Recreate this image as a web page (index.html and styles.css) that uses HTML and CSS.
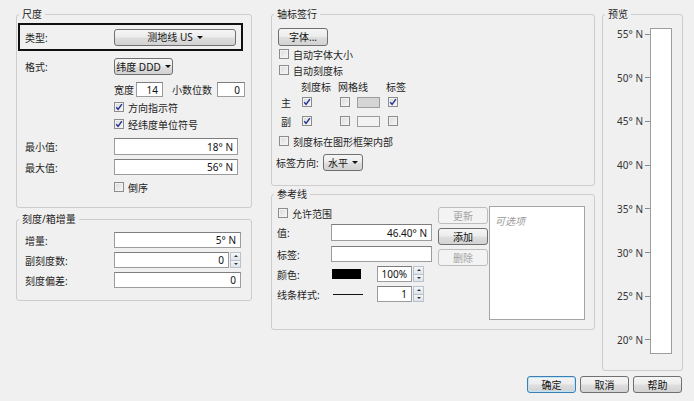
FILE: index.html
```html
<!DOCTYPE html>
<html lang="zh-CN">
<head>
<meta charset="utf-8">
<title>轴设置</title>
<link rel="stylesheet" href="styles.css">
</head>
<body>
<div class="dialog">
  <div class="cols">
    <div class="col col-left">
      <fieldset class="grp g-scale">
        <legend>尺度</legend>
        <div class="hl"><span class="lbl">类型:</span><span class="btn b-type">测地线 US<i class="arr"></i></span></div>
        <div class="row r-fmt"><span class="lbl">格式:</span><span class="btn b-fmt">纬度 DDD<i class="arr"></i></span></div>
        <div class="row r-wid"><span class="lbl"></span><span class="t-wid">宽度</span><span class="inp i-wid">14</span><span class="t-dec">小数位数</span><span class="inp i-dec">0</span></div>
        <div class="row r-cb1"><span class="lbl"></span><span class="cb on"><svg viewBox="0 0 8 8"><path d="M1.2 4.2 3.1 6.4 6.9 1.1"/></svg></span><span class="cbt">方向指示符</span></div>
        <div class="row r-cb2"><span class="lbl"></span><span class="cb on"><svg viewBox="0 0 8 8"><path d="M1.2 4.2 3.1 6.4 6.9 1.1"/></svg></span><span class="cbt">经纬度单位符号</span></div>
        <div class="row r-min"><span class="lbl">最小值:</span><span class="inp i-val">18° N</span></div>
        <div class="row r-max"><span class="lbl">最大值:</span><span class="inp i-val">56° N</span></div>
        <div class="row r-rev"><span class="lbl"></span><span class="cb"></span><span class="cbt">倒序</span></div>
      </fieldset>
      <fieldset class="grp g-inc">
        <legend>刻度/箱增量</legend>
        <div class="row r-i1"><span class="lbl">增量:</span><span class="inp i-inc">5° N</span></div>
        <div class="row r-i2"><span class="lbl">副刻度数:</span><span class="inp i-minor">0</span><span class="spin"><span class="up"></span><span class="dn"></span></span></div>
        <div class="row r-i3"><span class="lbl">刻度偏差:</span><span class="inp i-inc">0</span></div>
      </fieldset>
    </div>

    <div class="col col-mid">
      <fieldset class="grp g-axis">
        <legend>轴标签行</legend>
        <div class="row r-font"><span class="btn b-font">字体...</span></div>
        <div class="row r-ac"><span class="cb"></span><span class="cbt">自动字体大小</span></div>
        <div class="row r-ac"><span class="cb"></span><span class="cbt">自动刻度标</span></div>
        <div class="mhead"><span class="h1">刻度标</span><span class="h2">网格线</span><span class="h3">标签</span></div>
        <div class="mrow m1">
          <span class="ml">主</span>
          <span class="mc1"><span class="cb on"><svg viewBox="0 0 8 8"><path d="M1.2 4.2 3.1 6.4 6.9 1.1"/></svg></span></span>
          <span class="mc2"><span class="cb"></span></span>
          <span class="msw"><span class="sw sw-gray"></span></span>
          <span class="mc3"><span class="cb on"><svg viewBox="0 0 8 8"><path d="M1.2 4.2 3.1 6.4 6.9 1.1"/></svg></span></span>
        </div>
        <div class="mrow m2">
          <span class="ml">副</span>
          <span class="mc1"><span class="cb on"><svg viewBox="0 0 8 8"><path d="M1.2 4.2 3.1 6.4 6.9 1.1"/></svg></span></span>
          <span class="mc2"><span class="cb"></span></span>
          <span class="msw"><span class="sw sw-light"></span></span>
          <span class="mc3"><span class="cb"></span></span>
        </div>
        <div class="row r-inside"><span class="cb"></span><span class="cbt">刻度标在图形框架内部</span></div>
        <div class="row r-dir"><span class="t-dir">标签方向:</span><span class="btn b-dir">水平<i class="arr"></i></span></div>
      </fieldset>

      <fieldset class="grp g-ref">
        <legend>参考线</legend>
        <div class="ref">
          <div class="ref-form">
            <div class="row r-range"><span class="cb"></span><span class="cbt">允许范围</span></div>
            <div class="row rf r-val"><span class="rl">值:</span><span class="inp i-ref">46.40° N</span></div>
            <div class="row rf r-lab"><span class="rl">标签:</span><span class="inp i-ref"></span></div>
            <div class="row rf r-col"><span class="rl">颜色:</span><span class="colsw"></span><span class="inp i-pct">100%</span><span class="spin"><span class="up"></span><span class="dn"></span></span></div>
            <div class="row rf r-line"><span class="rl">线条样式:</span><span class="lnsw"></span><span class="inp i-pct">1</span><span class="spin"><span class="up"></span><span class="dn"></span></span></div>
          </div>
          <div class="ref-btns">
            <span class="btn dis">更新</span>
            <span class="btn">添加</span>
            <span class="btn dis">删除</span>
          </div>
          <div class="ref-list"><span class="ph">可选项</span></div>
        </div>
      </fieldset>
    </div>

    <fieldset class="grp g-prev">
      <legend>预览</legend>
      <div class="prev">
        <div class="axis">
          <div class="tk"><span>55° N</span><i></i></div>
          <div class="tk"><span>50° N</span><i></i></div>
          <div class="tk"><span>45° N</span><i></i></div>
          <div class="tk"><span>40° N</span><i></i></div>
          <div class="tk"><span>35° N</span><i></i></div>
          <div class="tk"><span>30° N</span><i></i></div>
          <div class="tk"><span>25° N</span><i></i></div>
          <div class="tk"><span>20° N</span><i></i></div>
        </div>
        <div class="bar"></div>
      </div>
    </fieldset>
  </div>

  <div class="foot">
    <span class="btn b-ok">确定</span>
    <span class="btn b-foot">取消</span>
    <span class="btn b-foot">帮助</span>
  </div>
</div>
</body>
</html>
```

FILE: styles.css
```css
* { box-sizing: border-box; }
html, body { margin: 0; padding: 0; }
body {
  width: 694px;
  height: 401px;
  overflow: hidden;
  background: #f0f0f0;
  font-family: "Noto Sans", "Noto Sans CJK SC", sans-serif;
  font-size: 10px;
  color: #1e1e1e;
}

.dialog { padding: 7px 11px 0 16px; }
.cols { display: flex; height: 364px; }
.col { display: flex; flex-direction: column; }
.col-left { width: 236px; }
.col-mid { width: 324px; margin-left: 19px; }

/* group boxes */
.grp {
  margin: 0;
  padding: 0;
  min-width: 0;
  border: 1px solid #cdcdcd;
  border-radius: 3px;
}
.grp legend {
  margin-left: 2px;
  padding: 0 3px;
  line-height: 14px;
  font-size: 10px;
  color: #1e1e1e;
}

.row { display: flex; align-items: center; flex: none; }
.lbl { width: 89px; flex: none; }
.cbt { margin-left: 4px; white-space: nowrap; }

/* controls */
.btn {
  display: inline-flex;
  align-items: center;
  justify-content: center;
  flex: none;
  height: 17px;
  border: 1px solid #707070;
  border-radius: 3px;
  background: linear-gradient(#f5f5f5 0%, #ececec 48%, #dedede 52%, #d2d2d2 100%);
  color: #111;
  white-space: nowrap;
  line-height: 1;
}
.btn.dis {
  border-color: #bdbdbd;
  background: #f3f3f3;
  color: #a3a3a3;
}
.arr {
  display: inline-block;
  width: 0;
  height: 0;
  margin-left: 4px;
  border-left: 3px solid transparent;
  border-right: 3px solid transparent;
  border-top: 3px solid #111;
}
.inp {
  display: flex;
  align-items: center;
  justify-content: flex-end;
  flex: none;
  height: 16px;
  padding-right: 4px;
  background: #fff;
  border: 1px solid #9c9c9c;
  border-top-color: #7d7d7d;
  color: #111;
  line-height: 1;
}
.cb {
  display: inline-flex;
  align-items: center;
  justify-content: center;
  flex: none;
  width: 10px;
  height: 10px;
  border: 1px solid #8c8c8c;
  background: linear-gradient(135deg, #d9d9d9, #f8f8f8);
  box-shadow: inset 0 0 0 1px #f2f2f2;
}
.cb svg { width: 8px; height: 8px; }
.cb path { fill: none; stroke: #24358f; stroke-width: 1.5; }
.spin {
  display: flex;
  flex-direction: column;
  flex: none;
  width: 11px;
  height: 16px;
  margin-left: 1px;
}
.spin span {
  flex: 1;
  display: flex;
  align-items: center;
  justify-content: center;
  border: 1px solid #b9c2cc;
  background: linear-gradient(#f4f6f9, #dde4eb);
}
.spin .dn { border-top: none; }
.spin .up::after, .spin .dn::after {
  content: "";
  width: 0;
  height: 0;
  border-left: 2px solid transparent;
  border-right: 2px solid transparent;
}
.spin .up::after { border-bottom: 2px solid #333; }
.spin .dn::after { border-top: 2px solid #333; }

/* 尺度 */
.g-scale { padding-bottom: 12px; }
.hl {
  display: flex;
  align-items: center;
  width: 225px;
  height: 28px;
  margin: 2px 0 0 1px;
  padding-left: 5px;
  border: 2px solid #111;
}
.b-type { width: 122px; }
.g-scale .row { padding-left: 8px; }
.r-fmt { margin-top: 7px; height: 17px; }
.b-fmt { width: 59px; }
.r-wid { margin-top: 7px; height: 15px; }
.r-wid .inp { height: 15px; }
.t-wid { width: 22px; }
.i-wid { width: 27px; }
.t-dec { width: 45px; margin-left: 9px; }
.i-dec { width: 28px; }
.r-cb1 { margin-top: 2px; height: 16px; }
.r-cb2 { margin-top: 1px; height: 16px; }
.r-min { margin-top: 6px; }
.r-max { margin-top: 4px; }
.i-val { width: 124px; height: 17px; }
.r-max .i-val { height: 16px; }
.r-rev { margin-top: 4px; height: 16px; }

/* 刻度/箱增量 */
.g-inc { margin-top: 4px; padding-bottom: 12px; }
.g-inc .row { padding-left: 8px; height: 16px; }
.r-i1 { margin-top: 6px; }
.r-i2, .r-i3 { margin-top: 4px; }
.i-inc { width: 127px; }
.i-minor { width: 115px; }

/* 轴标签行 */
.g-axis { padding-bottom: 14px; }
.r-font { margin-top: 7px; padding-left: 6px; height: 18px; }
.b-font { width: 50px; height: 18px; }
.r-ac { padding-left: 7px; height: 16px; }
.mhead {
  display: flex;
  align-items: center;
  height: 16px;
  padding-left: 29px;
  white-space: nowrap;
}
.h1 { width: 37px; }
.h2 { width: 48px; }
.mrow { display: flex; align-items: center; height: 16px; padding-left: 9px; }
.m2 { margin-top: 3px; }
.ml { width: 21px; }
.mc1 { width: 38px; display: flex; }
.mc2 { width: 17px; display: flex; }
.msw { width: 31px; display: flex; }
.mc3 { display: flex; }
.sw { width: 23px; height: 11px; border: 1px solid #9d9d9d; }
.sw-gray { background: #d5d5d5; }
.sw-light { background: #f2f2f2; }
.r-inside { margin-top: 4px; padding-left: 7px; height: 16px; }
.r-dir { margin-top: 5px; padding-left: 4px; height: 17px; }
.t-dir { width: 47px; }
.b-dir { width: 40px; height: 17px; }

/* 参考线 */
.g-ref { margin-top: 1px; padding-bottom: 9px; }
.ref { display: flex; align-items: flex-start; }
.ref-form { width: 160px; flex: none; }
.r-range { margin-top: 4px; padding-left: 6px; height: 16px; }
.rf { padding-left: 5px; height: 16px; }
.r-val { margin-top: 3px; height: 17px; }
.r-val .inp { height: 17px; }
.r-lab, .r-col, .r-line { margin-top: 4px; }
.r-lab { margin-top: 5px; }
.rl { width: 54px; flex: none; white-space: nowrap; }
.i-ref { width: 101px; }
.colsw { width: 29px; height: 10px; margin-left: 1px; background: #000; flex: none; }
.lnsw { width: 30px; height: 1px; margin-left: 2px; background: #111; flex: none; }
.i-pct { width: 35px; }
.r-col .i-pct { margin-left: 16px; }
.r-line .i-pct { margin-left: 14px; }
.ref-btns {
  display: flex;
  flex-direction: column;
  gap: 4px;
  width: 50px;
  margin: 6px 0 0 6px;
  flex: none;
}
.ref-btns .btn { width: 50px; }
.ref-list {
  width: 96px;
  height: 114px;
  margin: 5px 0 0 1px;
  padding: 6px 0 0 5px;
  background: #fff;
  border: 1px solid #a5a5a5;
  flex: none;
}
.ph { font-style: italic; color: #9a9a9a; }

/* 预览 */
.g-prev { width: 81px; margin-left: 7px; }
.prev { display: flex; padding-top: 7px; }
.axis {
  width: 47px;
  height: 326px;
  padding-bottom: 8px;
  display: flex;
  flex-direction: column;
  justify-content: space-between;
}
.tk {
  display: flex;
  align-items: center;
  justify-content: flex-end;
  height: 12px;
  color: #333;
  white-space: nowrap;
}
.tk i { width: 5px; height: 1px; margin-left: 2px; background: #8a8a8a; }
.bar { width: 22px; height: 326px; background: #fff; border: 1px solid #9e9e9e; }

/* footer */
.foot {
  display: flex;
  justify-content: flex-end;
  gap: 4px;
  margin-top: 5px;
  padding-right: 1px;
}
.b-ok, .b-foot { width: 49px; }
.b-ok {
  border-color: #3c7fb1;
  box-shadow: inset 0 0 0 1px #bfe4f8;
}
```
